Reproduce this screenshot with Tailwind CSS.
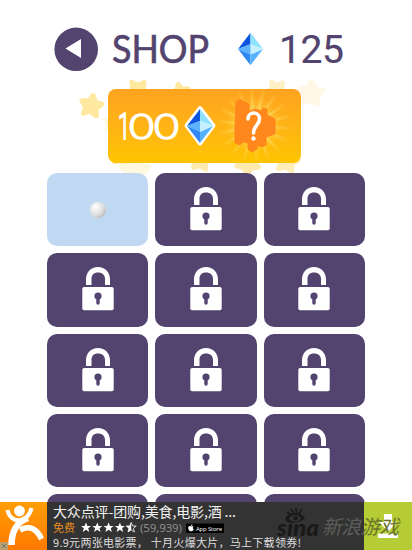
<!DOCTYPE html>
<html lang="zh">
  <head>
    <meta charset="utf-8" />
    <title>Shop</title>
    <script src="https://cdn.jsdelivr.net/npm/@tailwindcss/browser@4"></script>
  </head>
  <body class="bg-white w-[412px] h-[550px] overflow-hidden relative font-['Noto_Sans_CJK_SC','Noto_Sans',sans-serif]">
    <!-- shared shapes -->
    <svg class="absolute w-0 h-0">
      <defs>
        <linearGradient id="adBg" x1="0" y1="0" x2="0" y2="1"><stop offset="0" stop-color="#ff9e05" /><stop offset="1" stop-color="#ff7900" /></linearGradient>
        <radialGradient id="glow"><stop offset="0" stop-color="#fff0a8" stop-opacity=".9" /><stop offset=".6" stop-color="#ffe270" stop-opacity=".45" /><stop offset="1" stop-color="#ffd040" stop-opacity="0" /></radialGradient>
        <radialGradient id="ray" gradientUnits="userSpaceOnUse" cx="146" cy="36" r="38"><stop offset="0.300" stop-color="#fff0a0" stop-opacity=".6" /><stop offset="1" stop-color="#ffdc60" stop-opacity=".05" /></radialGradient>
        <symbol id="gem" viewBox="0 0 26 34">
          <path d="M13 0L0 17L13 12Z" fill="#0b55df" />
          <path d="M13 0L26 17L13 12Z" fill="#8fe2fd" />
          <path d="M0 17L13 22.500V34Z" fill="#2f88f4" />
          <path d="M26 17L13 22.500V34Z" fill="#56b2ff" />
          <path d="M13 12L26 17L13 23Z" fill="#c5f1ff" />
          <path d="M0 17L13 12V23Z" fill="#5cb2fd" />
        </symbol>
        <symbol id="star" viewBox="-12 -12 24 24">
          <path d="M0 -9L2.800 -3.600L9 -2.800L4.600 1.600L5.800 8L0 5.200L-5.800 8L-4.600 1.600L-9 -2.800L-2.800 -3.600Z" stroke-width="4.500" stroke-linejoin="round" fill="currentColor" stroke="currentColor" />
        </symbol>
        <symbol id="lock" viewBox="0 0 32 44">
          <path d="M4 18V12.500C4 5 9 0 16 0S28 5 28 12.500V18H23V12C23 8 20.500 5.500 16 5.500S9.500 8 9.500 12V18Z" fill="#fff" />
          <rect x="0.300" y="20" width="31.400" height="23.300" rx="1.800" fill="#fff" />
          <circle cx="16" cy="29" r="3.600" fill="#52446f" />
          <path d="M14.300 30H17.700V36A1.700 1.700 0 0 1 14.300 36Z" fill="#52446f" />
        </symbol>
      </defs>
    </svg>

    <!-- falling stars behind the page -->
    <svg class="absolute left-0 top-0 text-[#ffe8a0]" width="412" height="180">
      <use href="#star" x="78" y="92" width="27" height="27" transform="rotate(10 91 105)" />
      <use href="#star" x="125" y="77" width="27" height="27" transform="rotate(36 138 90)" />
      <use href="#star" x="168" y="81" width="24" height="24" transform="rotate(-12 180 93)" />
      <use href="#star" x="264" y="77" width="25" height="25" transform="rotate(40 276 90)" color="#fff0c8" />
      <use href="#star" x="296" y="78" width="30" height="30" transform="rotate(5 311 93)" color="#fff8e6" />
      <use href="#star" x="102" y="112" width="20" height="20" color="#fff8e2" />
      <use href="#star" x="110" y="145" width="22" height="22" transform="rotate(10 121 156)" />
      <use href="#star" x="118" y="154" width="34" height="34" color="#fff8df" />
      <use href="#star" x="188" y="147" width="26" height="26" transform="rotate(10 201 160)" color="#ffebb0" />
      <use href="#star" x="234" y="149" width="28" height="28" transform="rotate(40 248 163)" color="#ffe9ad" />
      <use href="#star" x="273" y="147" width="28" height="28" transform="rotate(12 287 161)" color="#ffedba" />
    </svg>

    <header class="relative h-[89px] pt-[27px] pl-[54px] flex items-start">
      <svg width="44" height="45" viewBox="0 0 44 45">
        <circle cx="22.200" cy="22.300" r="21.800" fill="#52446f" />
        <path d="M11.500 21.500L27 12V31Z" fill="#fff" />
      </svg>
      <svg class="ml-[14px] overflow-visible" width="100" height="45" fill="#52446f" stroke="#52446f" stroke-width=".7" font-family="Lato" font-size="38">
        <text x="0" y="35.800" textLength="97" lengthAdjust="spacingAndGlyphs">SHOP</text>
      </svg>
      <svg class="ml-[26px] mt-[5px]" width="25" height="34"><use href="#gem" width="25" height="34" /></svg>
      <svg class="ml-[17px] overflow-visible" width="70" height="45" fill="#52446f" stroke="#52446f" stroke-width=".2" font-family="Roboto" font-size="39">
        <text x="-1" y="36" textLength="65" lengthAdjust="spacing">125</text>
      </svg>
    </header>

    <!-- buy button -->
    <button class="relative block ml-[108px] w-[193px] h-[74px] rounded-lg overflow-hidden bg-linear-to-b from-[#ffa31f] to-[#fec400]">
      <svg width="193" height="74">
        <g id="rays"></g>
        <g fill="#fff" stroke="#fff" font-weight="300" font-size="36">
          <text x="10" y="50" stroke-width="1.800" font-family="Roboto" textLength="12" lengthAdjust="spacingAndGlyphs">1</text>
          <text x="21" y="50" stroke-width="1.500" font-family="Lato" textLength="50" lengthAdjust="spacingAndGlyphs">00</text>
        </g>
        <path d="M92 19L105.500 36.500L92 54.500L78.500 36.500Z" fill="#fff" stroke="#fff" stroke-width="4" stroke-linejoin="round" />
        <use href="#gem" x="79" y="20" width="26" height="34" />
        <path d="M128 13L132 10.500L141 15V22L148 20L153 22L155 19L159 20V26L167 30V45L158 48V56L154 58L149 56V60L144 63L140 60V54L135 53L132 56L127 54V38Z" fill="#ff871b" stroke="#ff871b" stroke-width="1" stroke-linejoin="round" />
        <path d="M140 30C140 22 151.500 22 151.500 30C151.500 36 145.500 36.500 145.500 44" fill="none" stroke="#fff" stroke-width="3.600" stroke-linecap="round" />
        <circle cx="145.500" cy="49.500" r="2.200" fill="#fff" />
      </svg>
    </button>

    <main id="grid" class="relative mt-[10px] ml-[47px] w-[318px] grid grid-cols-3 gap-x-[7px] gap-y-[7px] auto-rows-[73.300px]">
      <div class="rounded-[10px] bg-[#c1d8f2] flex items-center justify-center">
        <div class="w-4 h-4 rounded-full bg-radial-[at_35%_30%] from-white via-[#dcdcdc] via-55% to-[#999]"></div>
      </div>
    </main>

    <!-- ad banner -->
    <footer class="absolute left-0 bottom-0 w-[412px] h-[48px] bg-[#333] flex text-white">
      <svg class="shrink-0" width="47" height="48">
        <rect width="47" height="48" fill="url(#adBg)" />
        <circle cx="19.500" cy="9" r="5.400" fill="#fff" />
        <path d="M7.500 8C10 22 28 22 31.500 6" fill="none" stroke="#fff" stroke-width="4" />
        <path d="M28 16C16 20 11.500 31 11.500 43" fill="none" stroke="#fff" stroke-width="6.500" />
        <path d="M20 28C30 23 37 27 41.500 37" fill="none" stroke="#fff" stroke-width="5.500" />
        <rect y="40" width="8" height="8" fill="#b9a06c" />
        <path d="M2 42L6 46M6 42L2 46" stroke="#647d79" stroke-width="1" />
      </svg>
      <svg class="shrink-0" width="317" height="48" fill="#f2f2f2">
        <text x="6" y="14.500" font-size="14" textLength="183">大众点评-团购,美食,电影,酒 ...</text>
        <text x="6" y="30" font-size="11" fill="#e78a20">免费</text>
        <g id="rating" fill="#fff"></g>
        <text x="93" y="30" font-size="11.500" fill="#8d8d8d" textLength="42" font-family="Noto Sans">(59,939)</text>
        <rect x="139" y="21.500" width="38" height="9.500" rx="1" fill="#000" />
        <path d="M144 24.500C142 23.300 141 25 141.300 26.600C141.700 28.500 142.700 29.700 144 29C145.300 29.700 146.200 28.500 146.800 27.300C145.500 26.600 145.600 25.200 146.600 24.700C146 23.800 145 24.200 144 24.500ZM144 24C143.900 23 144.600 22.400 145.400 22.300C145.400 23.200 144.900 23.900 144 24Z" fill="#fff" />
        <text x="149" y="28.500" font-size="6" fill="#fff" textLength="26" font-family="Open Sans">App Store</text>
        <text x="6" y="45" font-size="11" fill="#dedede" textLength="248">9.9元两张电影票， 十月火爆大片，马上下载领券!</text>
      </svg>
      <div class="w-[48px] h-full bg-[#b5cc34] flex justify-center">
        <svg width="48" height="48"><path d="M20 12H28V20H33L24 30L15 20H20ZM14 31.500H34V36H14Z" fill="#fff" /></svg>
      </div>

      <!-- sina watermark -->
      <svg class="absolute left-[274px] top-[5px]" width="138" height="38">
        <g fill="#151515" opacity=".85">
          <text x="3" y="28.500" font-family="Lato" font-weight="900" font-style="italic" font-size="23" textLength="42" lengthAdjust="spacingAndGlyphs">sina</text>
          <path d="M11 12.500C12 8 17 5.500 22 6C27 6 29 9 31 11C28 15.500 13 18 11 12.500Z" />
          <path d="M13 5L16.500 7.500M17 2L19.500 6M22 1L22.500 6M28 2L25 7" stroke="#151515" stroke-width="1.600" />
          <ellipse cx="21" cy="11.300" rx="5.500" ry="3.300" fill="#353535" />
          <circle cx="21.500" cy="11.300" r="2.200" />
        </g>
        <linearGradient id="mark" gradientUnits="userSpaceOnUse" x1="0" x2="138" y1="0" y2="0"><stop offset=".65" stop-color="#5c5c5c" /><stop offset=".655" stop-color="#67732a" /></linearGradient>
        <text x="48" y="27" font-size="19.500" font-style="italic" fill="url(#mark)" textLength="77">新浪游戏</text>
      </svg>
    </footer>

    <script>
      const grid = document.getElementById('grid');
      for (let i = 1; i < 15; i++) {
        grid.innerHTML += `
          <div class="rounded-[10px] bg-[#52446f] flex justify-center pt-[14px]">
            <svg width="32" height="44"><use href="#lock" width="32" height="44" /></svg>
          </div>`;
      }

      // light rays around the mystery item
      const rays = document.getElementById('rays');
      let html = '';
      for (let a = 0; a < 360; a += 20) {
        html += `<path d="M146 36L182 34V38Z" fill="url(#ray)" transform="rotate(${a + 6} 146 36)" />`;
      }
      rays.innerHTML = html + '<circle cx="146" cy="36" r="28" fill="url(#glow)" />';

      // 4.5 stars
      const rating = document.getElementById('rating');
      for (let i = 0; i < 5; i++) {
        const full = 'M0 -5L1.400 -1.600L5 -1.500L2.200 .8L3.200 4.400L0 2.300L-3.200 4.400L-2.200 .8L-5 -1.500L-1.400 -1.600Z';
        const half = 'M0 -5V2.300L-3.200 4.400L-2.200 .8L-5 -1.500L-1.400 -1.600Z';
        rating.innerHTML += `<path transform="translate(${39 + i * 11.3} 25.500)" d="${i < 4 ? full : half}" />`;
        if (i === 4) {
          rating.innerHTML += `<path transform="translate(84.200 25.500)" d="${full}" fill="none" stroke="#fff" stroke-width=".8" />`;
        }
      }
    </script>
  </body>
</html>
